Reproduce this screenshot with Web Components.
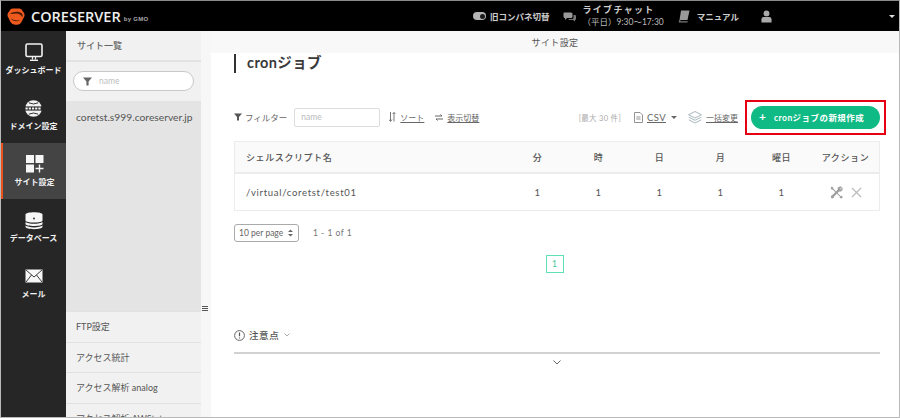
<!DOCTYPE html>
<html lang="ja">
<head>
<meta charset="utf-8">
<title>cronジョブ</title>
<style>
  html, body { margin: 0; height: 100%; }
  body { font-family: "Lato", "Noto Sans CJK JP", sans-serif; color: #444; background: #fff; overflow: hidden; }
  #frame { width: 900px; height: 418px; box-sizing: border-box; border: 1px solid #b9b9b9; border-top-color: #8a8a8a; display: flex; flex-direction: column; overflow: hidden; }
  #body { flex: 1; display: flex; min-height: 0; }
</style>
</head>
<body>
<div id="frame">
  <top-bar></top-bar>
  <div id="body">
    <nav-rail>
      <rail-item label="ダッシュボード" icon="monitor"></rail-item>
      <rail-item label="ドメイン設定" icon="globe"></rail-item>
      <rail-item label="サイト設定" icon="site" active></rail-item>
      <rail-item label="データベース" icon="db"></rail-item>
      <rail-item label="メール" icon="mail"></rail-item>
    </nav-rail>
    <site-list></site-list>
    <main-panel></main-panel>
  </div>
</div>

<script>
const JP = `"Lato", "Noto Sans CJK JP", sans-serif`;

class TopBar extends HTMLElement {
  connectedCallback() {
    const shadow = this.attachShadow({ mode: "open" });
    shadow.innerHTML = `
      <style>
        :host { display: flex; align-items: center; height: 30px; background: #000; color: #ddd; flex: none; position: relative; font-family: ${JP}; }
        .logo { display: flex; align-items: center; margin-left: 6px; width: 466px; }
        .name { font: 600 14.5px "Open Sans", sans-serif; color: #eee; letter-spacing: 0; margin-left: 6px; }
        .gmo { font: 700 6px "Liberation Sans", sans-serif; color: #aaa; margin: 5px 0 0 3px; letter-spacing: .3px; }
        .item { display: flex; align-items: center; font-size: 8.5px; font-weight: 700; color: #ccc; }
        .toggle { width: 13px; height: 8px; border-radius: 4px; background: #b5b5b5; position: relative; margin-right: 4px; }
        .toggle::after { content: ""; position: absolute; right: 1px; top: 1.5px; width: 5px; height: 5px; border-radius: 50%; background: #1c1c1c; }
        .chat { margin-left: 13px; }
        .chat-text { margin-left: 7px; line-height: 12px; font-size: 9px; font-weight: 700; letter-spacing: 1.3px; }
        .chat-text div + div { font-weight: 400; font-size: 8.5px; color: #bbb; letter-spacing: 0; }
        .manual { margin-left: 14px; }
        .manual span { margin-left: 7px; font-size: 8.5px; }
        .user { margin-left: 22px; }
        .caret { position: absolute; right: 4px; top: 14px; border: 3px solid transparent; border-top: 3px solid #ddd; border-bottom: 0; }
      </style>
      <div class="logo">
        <svg width="18" height="17" viewBox="0 0 18 17">
          <path d="M6 .5 H12 Q13.5 .5 14.5 1.6 L17 5 Q18 6.5 17.3 8.5 L14.5 14 Q13.2 16.5 10.5 16.7 H8 Q5 16.5 3.5 14 L.8 8.5 Q0 6.5 1 5 L3.5 1.6 Q4.5 .5 6 .5 Z" fill="#ee5a1e"/>
          <path d="M3 6 C6 3.2 12 3 15 5.5 C15.8 6.6 15.8 8 15.2 9.2 C14 6.8 12 5.6 9 5.6 C7 5.6 5 6.3 3 6 Z" fill="#4a1a08"/>
          <path d="M4 10.5 C6 13.4 10 14 13.5 12 C10.5 12.8 7 12.4 4 10.5 Z" fill="#4a1a08"/>
        </svg>
        <span class="name">CORESERVER</span><span class="gmo">by GMO</span>
      </div>
      <div class="item"><span class="toggle"></span>旧コンパネ切替</div>
      <div class="item chat">
        <svg width="13" height="11" viewBox="0 0 13 11"><path d="M1 1.5 H8 Q9.5 1.5 9.5 3 V5.5 Q9.5 7 8 7 H4 L2 9 V7 Q.5 7 .5 5.5 V3 Q.5 1.5 1 1.5Z" fill="#999"/><path d="M10.5 4 H12 Q13 4 13 5 V8 Q13 9 12 9 V10.5 L10 9 H6 L5.5 8 H9 Q10.5 8 10.5 6.5Z" fill="#777"/></svg>
        <div class="chat-text"><div>ライブチャット</div><div>（平日）9:30〜17:30</div></div>
      </div>
      <div class="item manual">
        <svg width="12" height="13" viewBox="0 0 12 13"><path d="M3 .5 H11.5 L9.5 10 H1.5 Z" fill="#999"/><path d="M1.5 10 Q.2 11 1 12.5 H9.5 L9.8 11.3 H2.6 Q2 10.8 2.6 10.2Z" fill="#777"/></svg>
        <span>マニュアル</span>
      </div>
      <div class="item user">
        <svg width="11" height="13" viewBox="0 0 12 14"><circle cx="6" cy="3.6" r="3.2" fill="#aaa"/><path d="M.5 13.5 V10 Q.5 7.6 3 7.6 H9 Q11.5 7.6 11.5 10 V13.5Z" fill="#aaa"/></svg>
      </div>
      <span class="caret"></span>
    `;
  }
}

const RAIL_ICONS = {
  monitor: `<svg width="18" height="19" viewBox="0 0 18 19"><rect x="1" y="1" width="16" height="12.5" rx="1.5" fill="none" stroke="#f2f2f2" stroke-width="1.6"/><path d="M7.5 14 V16.5 M10.5 14 V16.5" stroke="#f2f2f2" stroke-width="1.2"/><path d="M5 17.3 H13" stroke="#f2f2f2" stroke-width="1.4"/></svg>`,
  globe: `<svg width="17" height="17" viewBox="0 0 18 18"><circle cx="9" cy="9" r="8.8" fill="#f2f2f2"/><path d="M4 3 Q9 5.4 14 3 M4 15 Q9 12.6 14 15" fill="none" stroke="#262626" stroke-width="1"/><path d="M0 9 H18" stroke="#262626" stroke-width="4.4"/><path d="M.5 9 H17.5" stroke="#f2f2f2" stroke-width="2" stroke-dasharray="2.4 1"/></svg>`,
  site: `<svg width="18" height="18" viewBox="0 0 18 18" fill="#f6f6f6"><rect width="8" height="8"/><rect x="9.5" width="8" height="8"/><rect y="9.5" width="8" height="8"/><path d="M12.8 9.5 H14.2 V12.8 H17.5 V14.2 H14.2 V17.5 H12.8 V14.2 H9.5 V12.8 H12.8 Z"/></svg>`,
  db: `<svg width="18" height="19" viewBox="0 0 18 19" fill="#f6f6f6"><path d="M.5 3.5 C.5 .5 17.5 .5 17.5 3.5 V9.5 C17.5 12.2 .5 12.2 .5 9.5Z"/><path d="M.5 11 C3 13.4 15 13.4 17.5 11 V13 C17.5 15.6 .5 15.6 .5 13Z"/><path d="M.5 14.6 C3 17 15 17 17.5 14.6 V15.8 C17.5 19 .5 19 .5 15.8Z"/><circle cx="9" cy="7.5" r=".9" fill="#262626"/></svg>`,
  mail: `<svg width="18" height="14" viewBox="0 0 18 14"><rect x=".5" y=".5" width="17" height="13" fill="#f6f6f6"/><path d="M1 1 L9 8 L17 1 M1 13 L6.5 6 M17 13 L11.5 6" fill="none" stroke="#262626" stroke-width=".9"/></svg>`
};

class NavRail extends HTMLElement {
  connectedCallback() {
    const shadow = this.attachShadow({ mode: "open" });
    shadow.innerHTML = `
      <style>:host { display: flex; flex-direction: column; width: 65px; flex: none; background: #262626; }</style>
      <slot></slot>
    `;
  }
}

class RailItem extends HTMLElement {
  connectedCallback() {
    const shadow = this.attachShadow({ mode: "open" });
    shadow.innerHTML = `
      <style>
        :host { display: flex; flex-direction: column; align-items: center; height: 56px; box-sizing: border-box; padding-top: 11px; font-family: ${JP}; }
        :host([active]) { background: #444; border-left: 2px solid #e8531c; padding-right: 0; }
        .ic { height: 20px; display: flex; align-items: center; }
        .lb { font-size: 8px; font-weight: 700; color: #f2f2f2; line-height: 12px; margin-top: 2px; white-space: nowrap; }
      </style>
      <div class="ic">${RAIL_ICONS[this.getAttribute("icon")]}</div>
      <div class="lb">${this.getAttribute("label")}</div>
    `;
  }
}

class SiteList extends HTMLElement {
  connectedCallback() {
    const shadow = this.attachShadow({ mode: "open" });
    const rows = ["FTP設定", "アクセス統計", "アクセス解析 analog", "アクセス解析 AWStats"];
    shadow.innerHTML = `
      <style>
        :host { display: flex; flex-direction: column; width: 135px; flex: none; background: #f1f1f1; font-family: ${JP}; font-size: 9px; color: #555; position: relative; }
        .head { height: 29px; display: flex; align-items: center; padding-left: 11px; border-bottom: 2px solid #e3e3e3; font-weight: 500; font-size: 9px; color: #666; }
        .search { height: 39px; padding: 9px 7px 0 7px; box-sizing: border-box; }
        .pill { height: 20px; box-sizing: border-box; border: 1px solid #c8c8c8; border-radius: 10px; background: #fff; display: flex; align-items: center; padding-left: 9px; color: #c0c0c0; font-size: 8.5px; }
        .pill svg { margin-right: 7px; }
        .sel { flex: 1; background: #e4e4e4; padding: 10px 0 0 10px; font-size: 10.3px; line-height: 13px; color: #555; white-space: nowrap; }
        .rows { flex: none; height: 106px; overflow: hidden; }
        .row { height: 30.5px; box-sizing: border-box; display: flex; align-items: center; padding-left: 10px; border-top: 1.5px solid #e2e2e2; white-space: nowrap; }
      </style>
      <div class="head">サイト一覧</div>
      <div class="search">
        <div class="pill">
          <svg width="9" height="9" viewBox="0 0 9 9"><path d="M0 .5 H9 L5.6 4.5 V8.5 H3.4 V4.5 Z" fill="#666"/></svg>name
        </div>
      </div>
      <div class="sel">coretst.s999.coreserver.jp</div>
      <div class="rows">${rows.map(r => `<div class="row">${r}</div>`).join("")}</div>
    `;
  }
}

class ToolBar extends HTMLElement {
  connectedCallback() {
    const shadow = this.attachShadow({ mode: "open" });
    shadow.innerHTML = `
      <style>
        :host { display: flex; align-items: center; height: 34px; font-size: 8.5px; color: #666; font-family: ${JP}; }
        .lbl { display: flex; align-items: center; }
        .lbl svg { margin-right: 3px; }
        input { width: 86px; height: 19px; box-sizing: border-box; margin: 0 0 0 7px; padding: 0 0 0 6px; border: 1px solid #ddd; border-radius: 2px; font: 8.5px ${JP}; background: #fff; }
        input::placeholder { color: #bbb; }
        a { color: #666; text-decoration: underline; }
        .link { display: flex; align-items: center; }
        .sort { margin-left: 9px; }
        .sort a { letter-spacing: 0; font-size: 8px; }
        .sort svg, .view svg, .csv svg, .bulk svg { margin-right: 4px; }
        .view { margin-left: 11px; }
        .view a, .bulk a { font-size: 8px; }
        .spacer { flex: 1; }
        .max { font-size: 7.5px; color: #aaa; letter-spacing: .3px; }
        .csv { margin-left: 13px; }
        .csv a { font-size: 9.5px; letter-spacing: .4px; }
        .tri { margin-left: 5px; border: 3px solid transparent; border-top: 3.5px solid #666; border-bottom: 0; }
        .bulk { margin-left: 11px; }
        .add { margin-left: 13px; position: relative; width: 129px; height: 23px; border-radius: 12px; background: #0fba84; color: #fff; display: flex; align-items: center; font-size: 8.5px; font-weight: 700; letter-spacing: .45px; box-sizing: border-box; padding-left: 8px; }
        .add b { font-size: 12px; width: 15px; font-weight: 700; line-height: 12px; }
        .add::after { content: ""; position: absolute; left: -6px; top: -6px; right: -6px; bottom: -6px; border: 2px solid #e60012; }
      </style>
      <span class="lbl">
        <svg width="8" height="8" viewBox="0 0 9 9"><path d="M0 .5 H9 L5.6 4.5 V8.5 H3.4 V4.5 Z" fill="#555"/></svg>フィルター
      </span>
      <input placeholder="name">
      <span class="link sort">
        <svg width="7" height="10" viewBox="0 0 7 10"><path d="M1.5 0 V9 M0 7.5 L1.5 9.5 L3 7.5 M5 9.5 V.5 M3.6 2 L5 .5 L6.4 2" fill="none" stroke="#777" stroke-width="1"/></svg>
        <a>ソート</a>
      </span>
      <span class="link view">
        <svg width="8" height="7" viewBox="0 0 8 7"><path d="M0 2 H7 L5.5 .5 M8 5 H1 L2.5 6.5" fill="none" stroke="#666" stroke-width="1"/></svg>
        <a>表示切替</a>
      </span>
      <span class="spacer"></span>
      <span class="max">[最大 30 件]</span>
      <span class="link csv">
        <svg width="9" height="11" viewBox="0 0 9 11"><path d="M.5 .5 H6 L8.5 3 V10.5 H.5 Z M2.3 5 H6.5 M2.3 7 H6.5" fill="none" stroke="#888" stroke-width=".9"/></svg>
        <a>CSV</a><span class="tri"></span>
      </span>
      <span class="link bulk">
        <svg width="14" height="13" viewBox="0 0 14 13"><path d="M7 .5 L13.5 3.8 L7 7 L.5 3.8 Z M.8 6.2 L7 9.3 L13.2 6.2 M.8 8.8 L7 12 L13.2 8.8" fill="none" stroke="#9fb0b8" stroke-width=".9"/></svg>
        <a>一括変更</a>
      </span>
      <span class="add"><b>+</b>cronジョブの新規作成</span>
    `;
  }
}

class JobTable extends HTMLElement {
  connectedCallback() {
    const shadow = this.attachShadow({ mode: "open" });
    shadow.innerHTML = `
      <style>
        :host { display: block; border: 1px solid #ececec; font-family: ${JP}; color: #555; font-size: 9px; }
        .r { display: grid; grid-template-columns: 272px repeat(5, 61px) 1fr; align-items: center; }
        .r > * { text-align: center; }
        .r > :first-child { text-align: left; padding-left: 11px; }
        .h { height: 30px; background: #fafafa; border-bottom: 2px solid #ececec; font-weight: 500; letter-spacing: .6px; color: #555; }
        .b { height: 36px; font-size: 9.5px; letter-spacing: .7px; color: #555; }
        .acts { display: flex; justify-content: center; align-items: center; gap: 8px; }
      </style>
      <div class="r h"><div>シェルスクリプト名</div><div>分</div><div>時</div><div>日</div><div>月</div><div>曜日</div><div>アクション</div></div>
      <div class="r b"><div>/virtual/coretst/test01</div><div>1</div><div>1</div><div>1</div><div>1</div><div>1</div>
        <div class="acts">
          <svg width="13" height="13" viewBox="0 0 13 13">
            <path d="M2.5 10.5 L9 4" stroke="#a0a0a0" stroke-width="2.4"/>
            <path d="M8 1.6 Q10 -.2 12.4 1 L10 3 L10.6 3.6 L12.4 1.4 Q13.3 3.8 11.4 5.2 Q9.6 6 8.6 5 Q7 3.4 8 1.6Z" fill="#a0a0a0"/>
            <path d="M1.8 .6 L3.2 1.6 L3.6 3 L10.8 10.2 L12.2 9.6 L12.6 11.6 L11.4 12.6 L9.6 12 L10 10.8 L2.8 3.8 L1.4 3.4 L.6 1.8 Z" fill="#a0a0a0"/>
            <circle cx="2.4" cy="10.8" r="1.6" fill="#a0a0a0"/>
          </svg>
          <svg width="11" height="11" viewBox="0 0 11 11"><path d="M1 1 L10 10 M10 1 L1 10" stroke="#bdbdbd" stroke-width="1.3"/></svg>
        </div>
      </div>
    `;
  }
}

class PagerBar extends HTMLElement {
  connectedCallback() {
    const shadow = this.attachShadow({ mode: "open" });
    shadow.innerHTML = `
      <style>
        :host { display: block; font-family: ${JP}; font-size: 8.5px; color: #777; }
        .top { display: flex; align-items: center; }
        .sel { width: 65px; height: 18px; box-sizing: border-box; border: 1px solid #aaa; border-radius: 3px; display: flex; align-items: center; padding-left: 4px; color: #666; }
        .sel svg { margin-left: 5px; }
        .count { margin-left: 14px; letter-spacing: .5px; }
        .pages { display: flex; justify-content: center; margin: 13px 5px 0 0; }
        .p { width: 18px; height: 18px; box-sizing: border-box; border: 1px solid #5fe0b8; color: #3fc79c; display: flex; align-items: center; justify-content: center; }
      </style>
      <div class="top">
        <div class="sel">10 per page
          <svg width="5" height="8" viewBox="0 0 5 8"><path d="M0 3 L2.5 .5 L5 3Z M0 5 L2.5 7.5 L5 5Z" fill="#666"/></svg>
        </div>
        <span class="count">1 - 1 of 1</span>
      </div>
      <div class="pages"><div class="p">1</div></div>
    `;
  }
}

class NoticeBox extends HTMLElement {
  connectedCallback() {
    const shadow = this.attachShadow({ mode: "open" });
    shadow.innerHTML = `
      <style>
        :host { display: block; font-family: ${JP}; font-size: 9.5px; color: #555; }
        .t { display: flex; align-items: center; height: 20px; padding-bottom: 7px; border-bottom: 2px solid #d2d2d2; font-weight: 500; letter-spacing: .6px; }
        .t svg:first-child { margin-right: 4px; }
        .t svg:last-child { margin-left: 5px; }
        .more { display: flex; justify-content: center; padding-top: 6px; }
      </style>
      <div class="t">
        <svg width="11" height="11" viewBox="0 0 11 11"><circle cx="5.5" cy="5.5" r="4.9" fill="none" stroke="#555" stroke-width=".9"/><path d="M5.5 2.5 V6.3 M5.5 7.5 V8.6" stroke="#555" stroke-width="1.2"/></svg>
        注意点
        <svg width="6" height="4" viewBox="0 0 6 4"><path d="M.5 .5 L3 3 L5.5 .5" fill="none" stroke="#999" stroke-width=".8"/></svg>
      </div>
      <div class="more"><svg width="8" height="5" viewBox="0 0 8 5"><path d="M.5 .5 L4 4 L7.5 .5" fill="none" stroke="#666" stroke-width="1"/></svg></div>
    `;
  }
}

class MainPanel extends HTMLElement {
  connectedCallback() {
    const shadow = this.attachShadow({ mode: "open" });
    shadow.innerHTML = `
      <style>
        :host { display: flex; flex: 1; min-width: 0; font-family: ${JP}; }
        .gutter { width: 10px; flex: none; background: #f7f7f7; position: relative; }
        .burger { position: absolute; left: 1px; top: 275px; width: 6px; height: 2px; border-top: 1px solid #555; border-bottom: 1px solid #555; padding-bottom: 1px; }
        .burger::after { content: ""; display: block; height: 1px; background: #555; margin-top: 1px; }
        .col { flex: 1; min-width: 0; display: flex; flex-direction: column; }
        .sub { height: 22px; background: #f8f8f8; display: flex; align-items: center; justify-content: center; font-size: 9px; color: #555; letter-spacing: .4px; flex: none; }
        .wrap { padding: 1px 19px 0 23px; }
        h1 { margin: 0; height: 19px; border-left: 2px solid #333; padding-left: 11px; font-size: 14.5px; line-height: 18px; font-weight: 700; color: #3a3a3a; letter-spacing: .4px; }
        tool-bar { margin-top: 27px; }
        job-table { margin-top: 7px; }
        pager-bar { margin-top: 13px; }
        notice-box { margin-top: 52px; }
      </style>
      <div class="gutter"><span class="burger"></span></div>
      <div class="col">
        <div class="sub">サイト設定</div>
        <div class="wrap">
          <h1>cronジョブ</h1>
          <tool-bar></tool-bar>
          <job-table></job-table>
          <pager-bar></pager-bar>
          <notice-box></notice-box>
        </div>
      </div>
    `;
  }
}

customElements.define("top-bar", TopBar);
customElements.define("nav-rail", NavRail);
customElements.define("rail-item", RailItem);
customElements.define("site-list", SiteList);
customElements.define("tool-bar", ToolBar);
customElements.define("job-table", JobTable);
customElements.define("pager-bar", PagerBar);
customElements.define("notice-box", NoticeBox);
customElements.define("main-panel", MainPanel);
</script>
</body>
</html>
